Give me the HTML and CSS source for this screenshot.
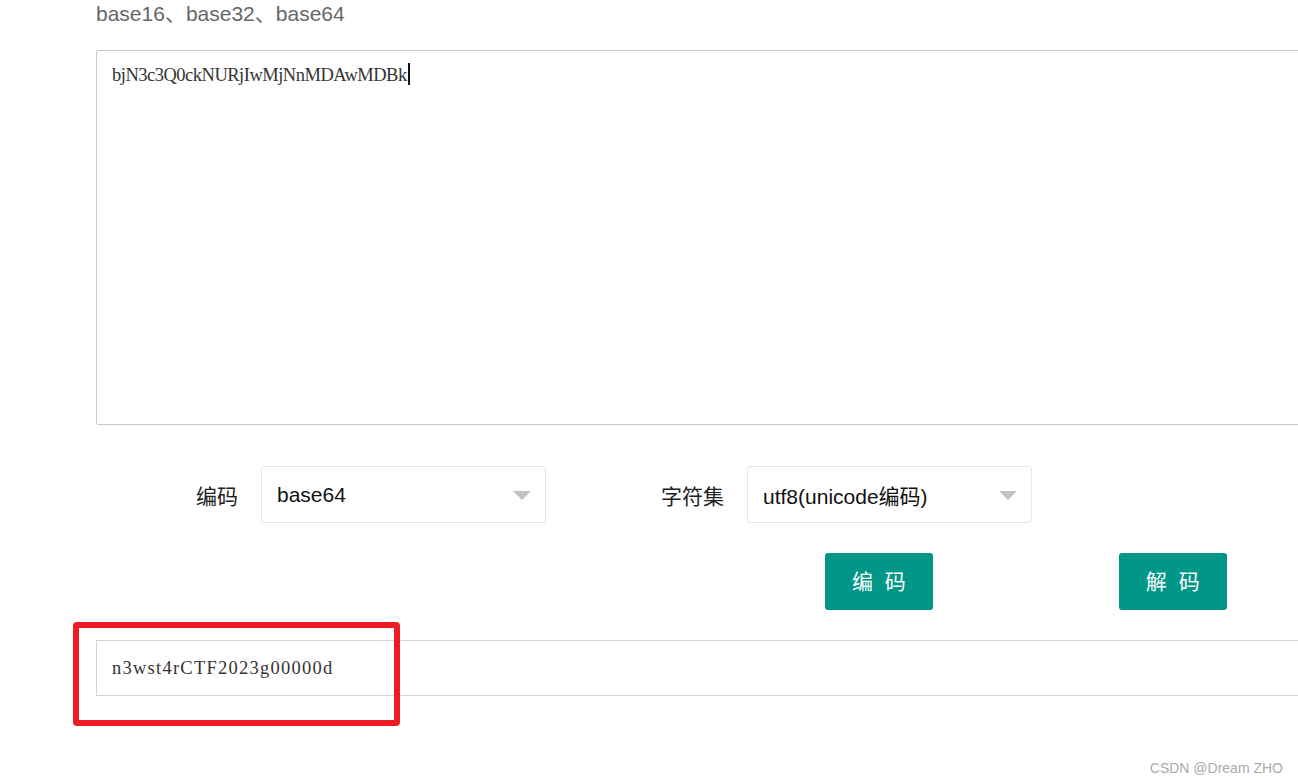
FILE: index.html
```html
<!DOCTYPE html>
<html lang="zh">
<head>
<meta charset="utf-8">
<title>base64</title>
<link rel="stylesheet" href="styles.css">
</head>
<body>
<div class="page">
  <p class="title">base16、base32、base64</p>
  <div class="source">bjN3c3Q0ckNURjIwMjNnMDAwMDBk<span class="caret"></span></div>
  <div class="options">
    <label class="label">编码</label>
    <div class="select">base64</div>
    <label class="label label-second">字符集</label>
    <div class="select">utf8(unicode编码)</div>
  </div>
  <div class="actions">
    <button class="btn">编 码</button>
    <button class="btn">解 码</button>
  </div>
  <div class="result">n3wst4rCTF2023g00000d</div>
  <div class="mark"></div>
  <div class="watermark">CSDN @Dream ZHO</div>
</div>
</body>
</html>
```
FILE: styles.css
```css
html, body {
  margin: 0;
  padding: 0;
  width: 1298px;
  height: 783px;
  overflow: hidden;
  background: #fff;
}
.page {
  position: relative;
  box-sizing: border-box;
  height: 783px;
  padding-left: 96px;
  font-family: "Liberation Sans", "Noto Sans CJK SC", sans-serif;
}
.title {
  margin: 0;
  font-size: 21px;
  line-height: 28px;
  color: #666;
}
.source {
  box-sizing: border-box;
  width: 1300px;
  height: 375px;
  margin-top: 22px;
  padding: 9px 15px;
  border: 1px solid #c9c9c9;
  border-radius: 2px;
  font-family: "Liberation Serif", serif;
  font-size: 18.5px;
  line-height: 30px;
  letter-spacing: -0.5px;
  color: #333;
}
.caret {
  display: inline-block;
  width: 2px;
  height: 22px;
  margin-left: 1px;
  vertical-align: -4px;
  background: #111;
}
.options {
  display: flex;
  align-items: center;
  margin-top: 41px;
}
.label {
  box-sizing: border-box;
  width: 165px;
  padding-right: 23px;
  text-align: right;
  font-size: 21px;
  color: #222;
}
.label-second {
  margin-left: 36px;
}
.select {
  position: relative;
  box-sizing: border-box;
  width: 285px;
  height: 57px;
  display: flex;
  align-items: center;
  padding-left: 15px;
  border: 1px solid #e6e6e6;
  border-radius: 3px;
  font-size: 21px;
  color: #111;
}
.select::after {
  content: "";
  position: absolute;
  right: 14px;
  top: 50%;
  margin-top: -4px;
  border-left: 9px solid transparent;
  border-right: 9px solid transparent;
  border-top: 9px solid #c2c2c2;
}
.actions {
  display: flex;
  gap: 186px;
  margin-top: 30px;
  margin-left: 729px;
}
.btn {
  height: 57px;
  padding: 0 27px 3px;
  border: none;
  border-radius: 3px;
  background: #009688;
  color: #fff;
  font-family: "Liberation Sans", "Noto Sans CJK SC", sans-serif;
  font-size: 21px;
  word-spacing: 6px;
  white-space: pre;
}
.result {
  box-sizing: border-box;
  width: 1300px;
  height: 56px;
  margin-top: 30px;
  padding-left: 15px;
  border: 1px solid #d2d2d2;
  font-family: "Liberation Serif", serif;
  font-size: 18.5px;
  line-height: 54px;
  letter-spacing: 1.25px;
  color: #333;
}
.mark {
  position: absolute;
  left: 73px;
  top: 622px;
  width: 327px;
  height: 104px;
  box-sizing: border-box;
  border: 6px solid #ed1c24;
  border-radius: 4px;
}
.watermark {
  position: absolute;
  right: 15px;
  bottom: 7px;
  font-family: "Liberation Sans", sans-serif;
  font-size: 14px;
  line-height: 16px;
  color: #aaa;
}
```
